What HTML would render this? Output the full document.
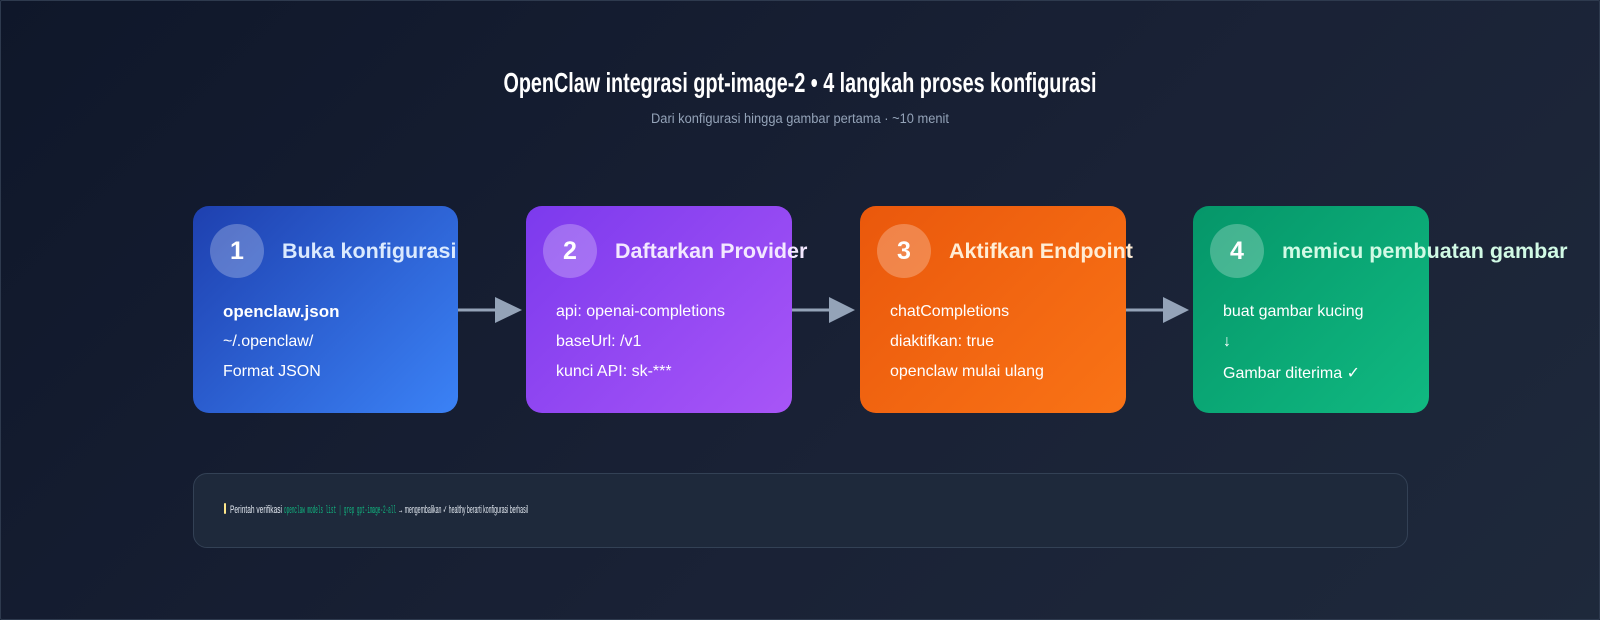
<!DOCTYPE html>
<html><head><meta charset="utf-8"><style>
html,body{margin:0;padding:0}
body{width:1600px;height:620px;overflow:hidden;background:linear-gradient(135deg,#0f172a 0%,#1a2236 60%,#1e293b 100%);font-family:"Liberation Sans",sans-serif;position:relative}
.frame{position:absolute;left:0;top:0;width:1598px;height:618px;border:1px solid #2e3a4e;border-radius:2px}
.box{position:absolute;top:206px;height:207px;border-radius:16px;overflow:visible}
.c{position:absolute;left:17px;top:18px;width:54px;height:54px;border-radius:50%;background:rgba(255,255,255,.25);color:#fff;font-weight:bold;font-size:25px;text-align:center;line-height:54px}
.h{position:absolute;left:89px;top:33px;font-weight:bold;font-size:21.5px;white-space:nowrap}
.l{position:absolute;left:30px;color:#fff;font-size:16px;white-space:nowrap}
.arrow{position:absolute;top:297px}
.note{position:absolute;left:193px;top:473px;width:1213px;height:73px;border:1px solid #334155;border-radius:14px;background:#1e293b}
</style></head><body>
<div class="frame"></div>
<svg width="1600" height="620" style="position:absolute;left:0;top:0">
<text x="800" y="92" text-anchor="middle" font-family="Liberation Sans" font-weight="bold" font-size="28" fill="#fff" textLength="593" lengthAdjust="spacingAndGlyphs">OpenClaw integrasi gpt-image-2 • 4 langkah proses konfigurasi</text>
<text x="800" y="123" text-anchor="middle" font-family="Liberation Sans" font-size="13.5" fill="#94a3b8" textLength="298" lengthAdjust="spacingAndGlyphs">Dari konfigurasi hingga gambar pertama · ~10 menit</text>
</svg>

<div class="box" style="left:193px;width:265px;background:linear-gradient(135deg,#1e40af,#3b82f6)">
<div class="c">1</div><div class="h" style="color:#dbeafe">Buka konfigurasi</div>
<div class="l" style="top:96px;font-weight:bold;font-size:17px">openclaw.json</div>
<div class="l" style="top:127px">~/.openclaw/</div>
<div class="l" style="top:157px">Format JSON</div></div>

<div class="box" style="left:526px;width:266px;background:linear-gradient(135deg,#7c3aed,#a855f7)">
<div class="c">2</div><div class="h" style="color:#f3e8ff">Daftarkan Provider</div>
<div class="l" style="top:97px">api: openai-completions</div>
<div class="l" style="top:127px">baseUrl: /v1</div>
<div class="l" style="top:157px">kunci API: sk-***</div></div>

<div class="box" style="left:860px;width:266px;background:linear-gradient(135deg,#ea580c,#f97316)">
<div class="c">3</div><div class="h" style="color:#ffedd5">Aktifkan Endpoint</div>
<div class="l" style="top:97px">chatCompletions</div>
<div class="l" style="top:127px">diaktifkan: true</div>
<div class="l" style="top:157px">openclaw mulai ulang</div></div>

<div class="box" style="left:1193px;width:236px;background:linear-gradient(135deg,#059669,#10b981)">
<div class="c">4</div><div class="h" style="color:#d1fae5">memicu pembuatan gambar</div>
<div class="l" style="top:97px">buat gambar kucing</div>
<div class="l" style="top:127px">↓</div>
<div class="l" style="top:157px">Gambar diterima ✓</div></div>

<svg class="arrow" style="left:458px" width="70" height="28"><line x1="0" y1="13" x2="40" y2="13" stroke="#94a3b8" stroke-width="3"/><polygon points="37,0 64,13 37,26" fill="#94a3b8"/></svg>
<svg class="arrow" style="left:792px" width="70" height="28"><line x1="0" y1="13" x2="40" y2="13" stroke="#94a3b8" stroke-width="3"/><polygon points="37,0 63,13 37,26" fill="#94a3b8"/></svg>
<svg class="arrow" style="left:1126px" width="70" height="28"><line x1="0" y1="13" x2="40" y2="13" stroke="#94a3b8" stroke-width="3"/><polygon points="37,0 63,13 37,26" fill="#94a3b8"/></svg>

<div class="note"></div>
<svg width="1600" height="620" style="position:absolute;left:0;top:0">
<rect x="224" y="503" width="2" height="11" rx="1" fill="#fde68a"/>
<text x="230" y="513" font-family="Liberation Sans" font-size="11" fill="#e2e8f0" textLength="52" lengthAdjust="spacingAndGlyphs">Perintah verifikasi</text>
<text x="284" y="513" font-family="Liberation Mono" font-size="11" fill="#10b981" textLength="112" lengthAdjust="spacingAndGlyphs">openclaw models list | grep gpt-image-2-all</text>
<text x="398" y="513" font-family="Liberation Sans" font-size="11" fill="#e2e8f0" textLength="130" lengthAdjust="spacingAndGlyphs">→ mengembalikan ✓ healthy berarti konfigurasi berhasil</text>
</svg>
</body></html>
